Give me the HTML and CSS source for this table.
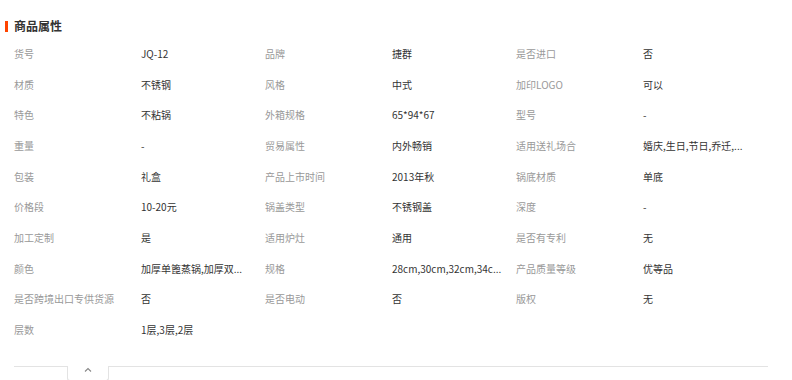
FILE: index.html
```html
<!DOCTYPE html>
<html lang="zh-CN">
<head>
<meta charset="utf-8">
<title>商品属性</title>
<link rel="stylesheet" href="styles.css">
</head>
<body>
<div class="panel">
  <div class="title"><span class="bar"></span><h2 class="title-text">商品属性</h2></div>
  <div class="attrs">
    <div class="k">货号</div><div class="v">JQ-12</div>
    <div class="k">品牌</div><div class="v">捷群</div>
    <div class="k">是否进口</div><div class="v">否</div>

    <div class="k">材质</div><div class="v">不锈钢</div>
    <div class="k">风格</div><div class="v">中式</div>
    <div class="k">加印LOGO</div><div class="v">可以</div>

    <div class="k">特色</div><div class="v">不粘锅</div>
    <div class="k">外箱规格</div><div class="v">65*94*67</div>
    <div class="k">型号</div><div class="v">-</div>

    <div class="k">重量</div><div class="v">-</div>
    <div class="k">贸易属性</div><div class="v">内外畅销</div>
    <div class="k">适用送礼场合</div><div class="v">婚庆,生日,节日,乔迁,...</div>

    <div class="k">包装</div><div class="v">礼盒</div>
    <div class="k">产品上市时间</div><div class="v">2013年秋</div>
    <div class="k">锅底材质</div><div class="v">单底</div>

    <div class="k">价格段</div><div class="v">10-20元</div>
    <div class="k">锅盖类型</div><div class="v">不锈钢盖</div>
    <div class="k">深度</div><div class="v">-</div>

    <div class="k">加工定制</div><div class="v">是</div>
    <div class="k">适用炉灶</div><div class="v">通用</div>
    <div class="k">是否有专利</div><div class="v">无</div>

    <div class="k">颜色</div><div class="v">加厚单篦蒸锅,加厚双...</div>
    <div class="k">规格</div><div class="v">28cm,30cm,32cm,34c...</div>
    <div class="k">产品质量等级</div><div class="v">优等品</div>

    <div class="k">是否跨境出口专供货源</div><div class="v">否</div>
    <div class="k">是否电动</div><div class="v">否</div>
    <div class="k">版权</div><div class="v">无</div>

    <div class="k">层数</div><div class="v">1层,3层,2层</div>
  </div>
  <div class="fold">
    <div class="fold-line fold-left"></div>
    <div class="fold-tab">
      <svg class="chev" width="8" height="5" viewBox="0 0 8 5"><polyline points="1,4.5 4,1.5 7,4.5" fill="none" stroke="#888" stroke-width="1.1"/></svg>
    </div>
    <div class="fold-line fold-right"></div>
  </div>
</div>
</body>
</html>
```
FILE: styles.css
```css
html, body {
  margin: 0;
  padding: 0;
  background: #fff;
}
body {
  font-family: "Noto Sans CJK SC", "Noto Sans", sans-serif;
  font-size: 10px;
  color: #333;
}
.panel {
  padding: 0 24px 0 14px;
}
.title {
  display: flex;
  align-items: center;
  gap: 6px;
  margin-left: -9px;
  padding-top: 17px;
  height: 18px;
}
.bar {
  width: 3px;
  height: 11px;
  background: #ff4400;
}
.title-text {
  margin: 0;
  font-size: 12px;
  font-weight: bold;
  color: #333;
  line-height: 18px;
}
.attrs {
  display: grid;
  grid-template-columns: 127px 124px 127px 124px 127px 125px;
  grid-auto-rows: 30.67px;
  align-items: center;
  margin-top: 3.67px;
  line-height: 14px;
}
.k {
  color: #999;
  white-space: nowrap;
}
.v {
  color: #333;
  white-space: nowrap;
}
.fold {
  display: flex;
  align-items: flex-start;
  margin-top: 20.7px;
  height: 14px;
}
.fold-line {
  border-top: 1px solid #e3e3e3;
}
.fold-left {
  width: 53px;
}
.fold-right {
  flex: 1;
}
.fold-tab {
  width: 40px;
  height: 13px;
  border: 1px solid #e3e3e3;
  border-top: none;
  border-radius: 0 0 3px 3px;
  display: flex;
  justify-content: center;
  padding-top: 1px;
}
.chev {
  display: block;
}
```
